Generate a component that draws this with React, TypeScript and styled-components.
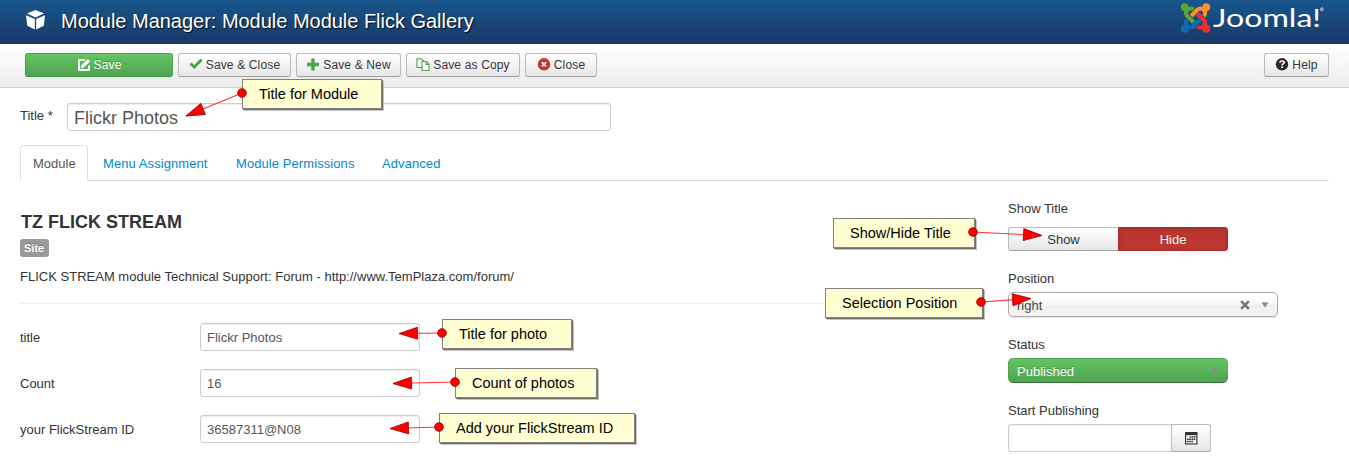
import React from 'react';
import styled, { createGlobalStyle, css } from 'styled-components';

const Global = createGlobalStyle`
  * { box-sizing: border-box; }
  body { margin: 0; background: #fff; overflow: hidden; }
  body, input { font-family: "Liberation Sans", Arial, sans-serif; font-size: 13px; line-height: 18px; color: #333; }
`;

const Page = styled.div`
  position: relative;
  width: 1349px;
  height: 463px;
  overflow: hidden;
`;

const Header = styled.header`
  display: flex;
  height: 44px;
  padding: 0 24px 0 26px;
  background: linear-gradient(#17568c, #1a3867);
`;

const BoxIcon = styled.svg`
  flex: none;
  width: 19px;
  height: 20px;
  margin: 10px 16px 0 0;
`;

const PageTitle = styled.h1`
  flex: 1;
  margin: 0;
  font-size: 20px;
  font-weight: normal;
  line-height: 42px;
  letter-spacing: -0.02px;
  color: #fff;
  white-space: nowrap;
  text-shadow: 1px 1px 1px rgba(0, 0, 0, 0.8);
`;

const Logo = styled.svg`
  flex: none;
  width: 146px;
  height: 38px;
`;

const Toolbar = styled.div`
  display: flex;
  gap: 5px;
  height: 44px;
  padding: 9px 20px 0 25px;
  background: linear-gradient(#fff, #ededed);
  border-bottom: 1px solid #d0d0d0;
`;

const Button = styled.button<{ $width: number; $primary?: boolean }>`
  display: flex;
  align-items: center;
  justify-content: center;
  gap: 3px;
  width: ${(p) => p.$width}px;
  height: 24px;
  padding: 0 0 1px;
  font: 12px/18px "Liberation Sans", Arial, sans-serif;
  letter-spacing: 0.15px;
  white-space: nowrap;
  color: #333;
  text-shadow: 0 1px 1px rgba(255, 255, 255, 0.75);
  background: linear-gradient(#fff, #e6e6e6);
  border: 1px solid #bbb;
  border-bottom-color: #a2a2a2;
  border-radius: 3px;
  box-shadow: 0 1px 2px rgba(0, 0, 0, 0.05);
  ${(p) =>
    p.$primary &&
    css`
      color: #fff;
      text-shadow: 0 -1px 0 rgba(0, 0, 0, 0.25);
      background: linear-gradient(#62c462, #51a351);
      border-color: #46a546 #46a546 #3d9440;
    `}
`;

const Spacer = styled.div`
  flex: 1;
`;

const Icon = styled.svg`
  flex: none;
  width: 14px;
  height: 14px;
`;

const Content = styled.main`
  padding: 15px 20px 0;
`;

const TitleRow = styled.div`
  display: flex;
  height: 28px;
`;

const TitleLabel = styled.label`
  width: 47px;
  padding-top: 4px;
`;

const Field = styled.input<{ $width: number; $large?: boolean; $joined?: boolean }>`
  display: block;
  width: ${(p) => p.$width}px;
  height: 28px;
  padding: ${(p) => (p.$large ? '2px' : '1px')} 6px 0;
  font-size: ${(p) => (p.$large ? 18 : 13)}px;
  color: #555;
  background: #fff;
  border: 1px solid #ccc;
  border-radius: ${(p) => (p.$joined ? '3px 0 0 3px' : '3px')};
  box-shadow: inset 0 1px 1px rgba(0, 0, 0, 0.075);
`;

const Tabs = styled.nav`
  display: flex;
  gap: 2px;
  height: 36px;
  margin-top: 14px;
  border-bottom: 1px solid #ddd;
`;

const Tab = styled.a<{ $width: number; $active?: boolean }>`
  width: ${(p) => p.$width}px;
  height: 36px;
  padding: 9px 0 0 12px;
  letter-spacing: ${(p) => (p.$active ? 0 : 0.08)}px;
  white-space: nowrap;
  color: ${(p) => (p.$active ? '#555' : '#08c')};
  border: 1px solid transparent;
  border-radius: 4px 4px 0 0;
  ${(p) =>
    p.$active &&
    css`
      background: #fff;
      border-color: #ddd #ddd #fff;
    `}
`;

const Columns = styled.div`
  display: flex;
  gap: 28px;
`;

const MainColumn = styled.section`
  width: 960px;
  padding-top: 30px;
`;

const SideColumn = styled.aside`
  width: 301px;
  padding-top: 19px;
`;

const Heading = styled.h2`
  margin: 0;
  padding-left: 1px;
  font-size: 18px;
  line-height: 22px;
`;

const Badge = styled.span`
  display: flex;
  align-items: center;
  width: 29px;
  height: 18px;
  margin-top: 6px;
  padding-left: 4px;
  font-size: 11px;
  font-weight: bold;
  color: #fff;
  text-shadow: 0 -1px 0 rgba(0, 0, 0, 0.25);
  background: #999;
  border-radius: 3px;
`;

const Description = styled.p`
  margin: 11px 0 0;
  letter-spacing: 0.01px;
`;

const Rule = styled.hr`
  height: 1px;
  margin: 17px 0 19px;
  background: #eee;
  border: 0;
`;

const FormRow = styled.div`
  display: flex;
  height: 28px;
  margin-bottom: 18px;
`;

const RowLabel = styled.label`
  width: 180px;
  padding-top: 6px;
`;

const SideLabel = styled.label<{ $gap: number }>`
  display: block;
  height: 18px;
  margin-bottom: ${(p) => p.$gap}px;
`;

const Toggle = styled.div`
  display: flex;
  width: 220px;
  margin-bottom: 19px;
`;

const ToggleOption = styled.button<{ $danger?: boolean }>`
  width: 110px;
  height: 24px;
  padding: 2px 0 0;
  font: 13px/18px "Liberation Sans", Arial, sans-serif;
  color: #333;
  background: linear-gradient(#fff, #e6e6e6);
  border: 1px solid #bbb;
  border-bottom-color: #a2a2a2;
  border-radius: 3px 0 0 3px;
  border-right-width: 0;
  ${(p) =>
    p.$danger &&
    css`
      color: #fff;
      text-shadow: 0 -1px 0 rgba(0, 0, 0, 0.25);
      background: #bd362f;
      border: 1px solid #ad312b;
      border-radius: 0 3px 3px 0;
      box-shadow: inset 0 2px 4px rgba(0, 0, 0, 0.15);
    `}
`;

const Select = styled.div<{ $width: number; $success?: boolean }>`
  display: flex;
  align-items: center;
  width: ${(p) => p.$width}px;
  height: 25px;
  margin-bottom: 19px;
  padding: 3px 8px 0;
  color: #444;
  background: linear-gradient(#fff 20%, #f6f6f6 50%, #eee 52%, #f4f4f4);
  border: 1px solid #aaa;
  border-radius: 5px;
  box-shadow: 0 1px 1px rgba(0, 0, 0, 0.1);
  ${(p) =>
    p.$success &&
    css`
      color: #fff;
      text-shadow: 0 -1px 0 rgba(0, 0, 0, 0.25);
      background: linear-gradient(#62c462, #51a351);
      border-color: #51a351 #51a351 #387038;
      box-shadow: none;
    `}
`;

const SelectText = styled.span`
  flex: 1;
`;

const Clear = styled.svg`
  width: 10px;
  height: 10px;
  margin: -3px 11px 0 0;
`;

const Caret = styled.svg`
  width: 8px;
  height: 6px;
  margin: -3px 0 0 0;
`;

const DateRow = styled.div`
  display: flex;
`;

const DateButton = styled.button`
  display: flex;
  align-items: center;
  justify-content: center;
  width: 40px;
  height: 28px;
  margin-left: -1px;
  padding: 0 1px 1px 0;
  background: linear-gradient(#fff, #e6e6e6);
  border: 1px solid #bbb;
  border-bottom-color: #a2a2a2;
  border-radius: 0 3px 3px 0;
`;

const Callout = styled.div<{ $x: number; $y: number; $w: number }>`
  position: absolute;
  left: ${(p) => p.$x}px;
  top: ${(p) => p.$y}px;
  width: ${(p) => p.$w}px;
  height: 30px;
  padding-left: 16px;
  font-size: 14.5px;
  line-height: 28px;
  white-space: nowrap;
  color: #000;
  background: #ffffd2;
  border: 1px solid #808080;
  box-shadow: 1px 1px 0 #707070, 2px 2px 0 #c4c4c4;
`;

const Arrows = styled.svg`
  position: absolute;
  inset: 0;
  width: 1349px;
  height: 463px;
  pointer-events: none;
`;

const callouts = [
  { text: 'Title for Module', x: 242, y: 79, w: 140, from: [242, 93], to: [186, 116] },
  { text: 'Title for photo', x: 442, y: 319, w: 130, from: [442, 333], to: [399, 333.5] },
  { text: 'Count of photos', x: 455, y: 368, w: 142, from: [455, 382], to: [393, 383.5] },
  { text: 'Add your FlickStream ID', x: 439, y: 413, w: 196, from: [439, 427], to: [390, 428.5] },
  { text: 'Show/Hide Title', x: 833, y: 218, w: 142, from: [973, 232], to: [1042, 235.5] },
  { text: 'Selection Position', x: 825, y: 288, w: 158, from: [981, 302], to: [1031, 298.5] },
];

function Arrow({ from, to }: { from: number[]; to: number[] }) {
  const angle = (Math.atan2(to[1] - from[1], to[0] - from[0]) * 180) / Math.PI;
  return (
    <g>
      <line x1={from[0]} y1={from[1]} x2={to[0]} y2={to[1]} stroke="#f33" strokeWidth="1.1" />
      <path
        d="M0 0L-18.5 -6V6Z"
        transform={`translate(${to[0]} ${to[1]}) rotate(${angle})`}
        fill="#f00"
        stroke="#900"
        strokeWidth="0.8"
      />
      <circle cx={from[0]} cy={from[1]} r="4.3" fill="#f00" stroke="#900" strokeWidth="0.9" />
    </g>
  );
}

function JoomlaLogo() {
  const arms = [
    { color: '#0f6cb3', turn: 0 },
    { color: '#5ba532', turn: 90 },
    { color: '#f9922c', turn: 180 },
    { color: '#ee3028', turn: 270 },
  ];
  return (
    <Logo viewBox="1179 0 146 38">
      <g transform="translate(1195.5 18) scale(1.22)">
        {arms.map((a) => (
          <g key={a.turn} transform={`rotate(${a.turn})`}>
            <circle cx="-8.8" cy="8.8" r="3.2" fill={a.color} />
            <path
              d="M3.5 1.6L-1.8 6.9A3.65 3.65 0 0 1 -6.95 1.75L-6.8 1.6"
              fill="none"
              stroke={a.color}
              strokeWidth="3.3"
            />
          </g>
        ))}
      </g>
      <text
        x="1213"
        y="27"
        fill="#fff"
        fontFamily="Lato, sans-serif"
        fontSize="25.5"
        textLength="108"
        lengthAdjust="spacingAndGlyphs"
      >
        Joomla!
      </text>
      <circle cx="1321.8" cy="9.2" r="1.5" fill="#6f8fb5" stroke="#a8bcd4" strokeWidth="0.9" />
    </Logo>
  );
}

export default function App() {
  return (
    <Page>
      <Global />
      <Header>
        <BoxIcon viewBox="0 0 19 20" fill="#fff">
          <path d="M9.5 0L18 3.6L9.5 7.6L1 3.6Z" />
          <path d="M0 5.2L8.8 9V19.4L1.2 15.8Z" />
          <path d="M19 5.2L10.2 9V19.4L17.8 15.8Z" />
        </BoxIcon>
        <PageTitle>Module Manager: Module Module Flick Gallery</PageTitle>
        <JoomlaLogo />
      </Header>
      <Toolbar>
        <Button $width={148} $primary>
          <Icon viewBox="0 0 14 14">
            <path d="M8 2H2V12H12V7.5" fill="none" stroke="#fff" strokeWidth="1.8" />
            <path d="M4.2 7.6L10.8 1L13.2 3.2L6.6 9.8L3.8 10.4Z" fill="#fff" />
          </Icon>
          Save
        </Button>
        <Button $width={113}>
          <Icon viewBox="0 0 14 14">
            <path d="M1.5 5.5L5.3 9L12.5 1.8" fill="none" stroke="#46a546" strokeWidth="3" />
          </Icon>
          Save &amp; Close
        </Button>
        <Button $width={105}>
          <Icon viewBox="0 0 14 14">
            <path d="M7 0.5V12.5M1 6.5H13" stroke="#46a546" strokeWidth="3.4" />
          </Icon>
          Save &amp; New
        </Button>
        <Button $width={114}>
          <Icon viewBox="0 0 14 14" fill="#fff" stroke="#46a546" strokeWidth="1.1">
            <path d="M1 0.7H5L7.6 3.1V9.5H1Z" />
            <path d="M6 3.5H10.3L13 6.1V12.5H6Z" />
            <path d="M10 3.5V6.5H13" fill="none" />
          </Icon>
          Save as Copy
        </Button>
        <Button $width={72}>
          <Icon viewBox="0 0 14 14">
            <circle cx="7" cy="6.3" r="6.2" fill="#bd362f" />
            <path d="M4.8 4.1L9.2 8.5M9.2 4.1L4.8 8.5" stroke="#fff" strokeWidth="1.7" />
          </Icon>
          Close
        </Button>
        <Spacer />
        <Button $width={65}>
          <Icon viewBox="0 0 14 14">
            <circle cx="7" cy="6.3" r="6.2" fill="#2a2a2a" />
            <path d="M5 4.7C5 2.5 9.2 2.5 9.2 4.6C9.2 6 7.1 5.9 7.1 7.5" fill="none" stroke="#fff" strokeWidth="1.6" />
            <path d="M6.2 8.5H8V10.1H6.2Z" fill="#fff" />
          </Icon>
          Help
        </Button>
      </Toolbar>
      <Content>
        <TitleRow>
          <TitleLabel>Title *</TitleLabel>
          <Field $width={544} $large defaultValue="Flickr Photos" />
        </TitleRow>
        <Tabs>
          <Tab $width={68} $active>
            Module
          </Tab>
          <Tab $width={131}>Menu Assignment</Tab>
          <Tab $width={144}>Module Permissions</Tab>
          <Tab $width={82}>Advanced</Tab>
        </Tabs>
        <Columns>
          <MainColumn>
            <Heading>TZ FLICK STREAM</Heading>
            <Badge>Site</Badge>
            <Description>FLICK STREAM module Technical Support: Forum - http://www.TemPlaza.com/forum/</Description>
            <Rule />
            <FormRow>
              <RowLabel>title</RowLabel>
              <Field $width={220} defaultValue="Flickr Photos" />
            </FormRow>
            <FormRow>
              <RowLabel>Count</RowLabel>
              <Field $width={220} defaultValue="16" />
            </FormRow>
            <FormRow>
              <RowLabel>your FlickStream ID</RowLabel>
              <Field $width={220} defaultValue="36587311@N08" />
            </FormRow>
          </MainColumn>
          <SideColumn>
            <SideLabel $gap={9}>Show Title</SideLabel>
            <Toggle>
              <ToggleOption>Show</ToggleOption>
              <ToggleOption $danger>Hide</ToggleOption>
            </Toggle>
            <SideLabel $gap={4}>Position</SideLabel>
            <Select $width={270}>
              <SelectText>right</SelectText>
              <Clear viewBox="0 0 9 9">
                <path d="M1 1L8 8M8 1L1 8" stroke="#777" strokeWidth="2.3" />
              </Clear>
              <Caret viewBox="0 0 8 6">
                <path d="M0.5 0.5H7.5L4 5.5Z" fill="#888" />
              </Caret>
            </Select>
            <SideLabel $gap={4}>Status</SideLabel>
            <Select $width={220} $success>
              <SelectText>Published</SelectText>
              <Caret viewBox="0 0 8 6">
                <path d="M0.5 0.5H7.5L4 5.5Z" fill="#888" />
              </Caret>
            </Select>
            <SideLabel $gap={4}>Start Publishing</SideLabel>
            <DateRow>
              <Field $width={164} $joined />
              <DateButton>
                <Icon viewBox="0 0 14 14">
                  <path d="M1 1H13.5V13.5H1Z" fill="#333" />
                  <path d="M2.2 4.2H12.3V12.4H2.2Z" fill="#fff" />
                  <path d="M5.5 6H11.6M3 8.3H11.6M3 10.6H9.5" stroke="#333" strokeWidth="1.5" strokeDasharray="1.7 0.5" />
                </Icon>
              </DateButton>
            </DateRow>
          </SideColumn>
        </Columns>
      </Content>
      {callouts.map((c) => (
        <Callout key={c.text} $x={c.x} $y={c.y} $w={c.w}>
          {c.text}
        </Callout>
      ))}
      <Arrows viewBox="0 0 1349 463">
        {callouts.map((c) => (
          <Arrow key={c.text} from={c.from} to={c.to} />
        ))}
      </Arrows>
    </Page>
  );
}
